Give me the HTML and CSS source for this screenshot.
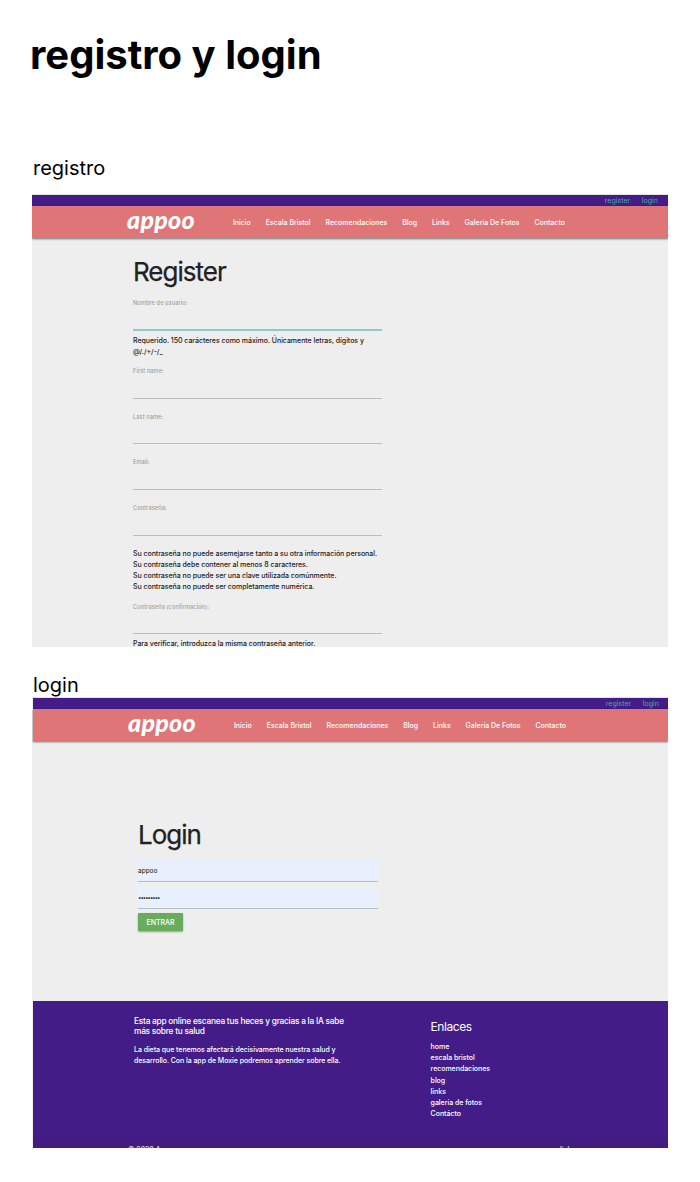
FILE: index.html
```html
<!DOCTYPE html>
<html lang="es">
<head>
<meta charset="utf-8">
<title>registro y login</title>
<link rel="stylesheet" href="styles.css">
</head>
<body>
<h1 class="page-title">registro y login</h1>
<h2 class="caption">registro</h2>
<section class="screen screen-register">
  <div class="topbar"><a>register</a><a>login</a></div>
  <nav class="navbar">
    <span class="logo">appoo</span>
    <a>Inicio</a><a>Escala Bristol</a><a>Recomendaciones</a><a>Blog</a><a>Links</a><a>Galería De Fotos</a><a>Contacto</a>
  </nav>
  <form class="register-form">
    <h3 class="heading">Register</h3>
    <div class="field active"><label>Nombre de usuario:</label></div>
    <p class="help username-help">Requerido. 150 carácteres como máximo. Únicamente letras, dígitos y<br>@/./+/-/_</p>
    <div class="field"><label>First name:</label></div>
    <div class="field"><label>Last name:</label></div>
    <div class="field"><label>Email:</label></div>
    <div class="field"><label>Contraseña:</label></div>
    <p class="help password-help">Su contraseña no puede asemejarse tanto a su otra información personal.<br>Su contraseña debe contener al menos 8 caracteres.<br>Su contraseña no puede ser una clave utilizada comúnmente.<br>Su contraseña no puede ser completamente numérica.</p>
    <div class="field confirm"><label>Contraseña (confirmación):</label></div>
    <p class="help verify-help">Para verificar, introduzca la misma contraseña anterior.</p>
  </form>
</section>
<h2 class="caption caption-login">login</h2>
<section class="screen screen-login">
  <div class="topbar"><a>register</a><a>login</a></div>
  <nav class="navbar">
    <span class="logo">appoo</span>
    <a>Inicio</a><a>Escala Bristol</a><a>Recomendaciones</a><a>Blog</a><a>Links</a><a>Galería De Fotos</a><a>Contacto</a>
  </nav>
  <form class="login-form">
    <h3 class="heading heading-login">Login</h3>
    <div class="filled">appoo</div>
    <div class="filled password">•••••••••</div>
    <button class="submit" type="button">ENTRAR</button>
  </form>
  <footer class="footer">
    <div class="footer-main">
      <div class="about">
        <h4>Esta app online escanea tus heces y gracias a la IA sabe<br>más sobre tu salud</h4>
        <p>La dieta que tenemos afectará decisivamente nuestra salud y<br>desarrollo. Con la app de Moxie podremos aprender sobre ella.</p>
      </div>
      <div class="links">
        <h4>Enlaces</h4>
        <ul><li>home</li><li>escala bristol</li><li>recomendaciones</li><li>blog</li><li>links</li><li>galería de fotos</li><li>Contácto</li></ul>
      </div>
    </div>
    <div class="copyright"><span>© 2020 Appoo</span><span>links</span></div>
  </footer>
</section>
</body>
</html>
```
FILE: styles.css
```css
* { box-sizing: border-box; margin: 0; padding: 0; }
body { width: 700px; height: 1182px; padding: 30px 32px 0; background: #fff; color: #000; font-family: Inter, "Liberation Sans", sans-serif; overflow: hidden; }
.page-title { height: 123px; margin-left: -2px; font-size: 40px; line-height: 50px; font-weight: 700; white-space: nowrap; }
.caption { height: 42px; padding-left: 1px; font-size: 20px; line-height: 30px; font-weight: 400; }
.screen { width: 636px; overflow: hidden; background: #eee; box-shadow: 0 -1px 0 #e2e2e2; }
.screen-register { height: 452px; }
.caption-login { height: 51px; padding-top: 23px; }
.screen-login { height: 450px; padding-left: 1px; }
.topbar { display: flex; justify-content: flex-end; gap: 11.5px; height: 11px; padding-right: 10px; background: #431c87; color: #3fae9f; font-size: 7.1px; line-height: 12px; }
.screen-login .topbar { padding-right: 9px; }
.navbar { display: flex; align-items: center; gap: 14.9px; height: 32px; padding-left: 95px; background: #df7576; color: #fff; font-size: 7px; font-weight: 500; white-space: nowrap; box-shadow: 0 1px 2px rgba(0,0,0,.55); }
.logo { width: 91px; height: 32px; font-family: Lato, "Noto Sans", sans-serif; font-size: 25px; line-height: 26px; font-weight: 900; font-style: italic; letter-spacing: 0.25px; }
.register-form { width: 350px; padding: 14px 0 0 101px; }
.heading { height: 46px; color: #212121; font-size: 26px; line-height: 39px; font-weight: 400; letter-spacing: -1px; -webkit-text-stroke: 0.25px #212121; }
.field { width: 249px; height: 45.7px; border-bottom: 1px solid #bdbdbd; color: #9e9e9e; }
.field label { display: block; padding-top: 14px; font-size: 5.6px; line-height: 8px; font-weight: 500; letter-spacing: 0.1px; }
.active { height: 33px; border-bottom: 2px solid #8dccc5; }
.active label { padding-top: 1px; }
.help { color: #212121; font-size: 7px; line-height: 11.2px; font-weight: 450; letter-spacing: -0.035px; white-space: nowrap; }
.username-help { height: 22px; padding-top: 4px; }
.password-help { height: 57px; padding-top: 12px; }
.confirm { height: 41.2px; }
.confirm label { padding-top: 10px; }
.verify-help { padding-top: 4.5px; }
.login-form { height: 260px; padding: 74px 0 0 105px; }
.heading-login { height: 45px; }
.filled { width: 240px; height: 22px; margin-bottom: 5px; background: #e8f0fe; border-bottom: 1px solid #b5bdc8; color: #111; font-size: 6.5px; line-height: 23px; }
.password { margin-bottom: 4px; font-size: 6px; line-height: 22px; letter-spacing: -1px; }
.submit { display: block; width: 45px; height: 18px; border: 0; border-radius: 1px; background: #67ad5b; color: #fff; box-shadow: 0 1px 2px rgba(0,0,0,.35); font: 500 7px Inter, sans-serif; }
.footer { height: 147px; background: #431c87; color: #fff; }
.footer-main { display: flex; height: 137px; padding: 16px 0 0 101px; }
.about { width: 296.6px; }
.about h4 { margin-bottom: 8px; font-size: 8.3px; line-height: 9.5px; font-weight: 450; letter-spacing: -0.235px; white-space: nowrap; }
.about p, .links ul { font-size: 7px; line-height: 11.2px; font-weight: 450; white-space: nowrap; }
.about p { letter-spacing: -0.055px; }
.links h4 { height: 24px; font-size: 12px; line-height: 20px; font-weight: 400; letter-spacing: -0.45px; }
.links ul { list-style: none; letter-spacing: -0.03px; }
.copyright { display: flex; justify-content: space-between; height: 10px; padding: 5.5px 93px 0 95px; background: #421c80; font-size: 7px; line-height: 11px; overflow: hidden; }
```
